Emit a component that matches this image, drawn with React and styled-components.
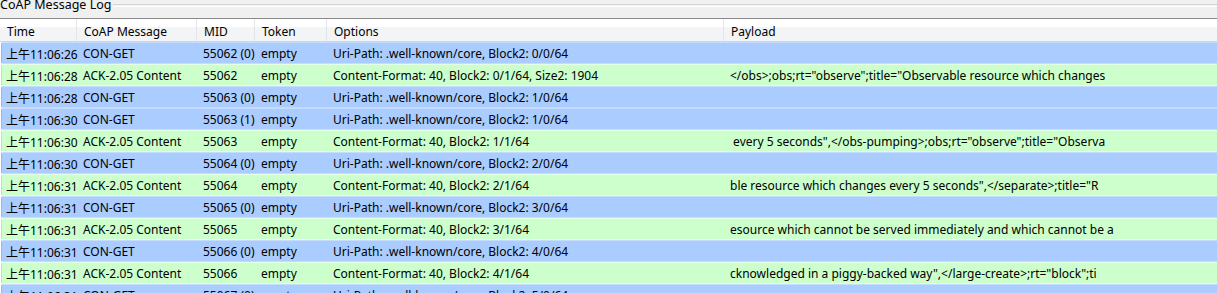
import React from 'react';
import styled, { createGlobalStyle } from 'styled-components';

const GlobalStyle = createGlobalStyle`
  html, body {
    margin: 0;
    padding: 0;
    background: #f0f0f0;
    overflow: hidden;
  }
  body {
    font-family: "Noto Sans", "Noto Sans CJK SC", sans-serif;
    font-size: 12px;
    color: #000;
  }
`;

const Panel = styled.div`
  width: 1217px;
  height: 293px;
  overflow: hidden;
  background: #f0f0f0;
`;

const TitleBar = styled.div`
  display: flex;
  align-items: flex-start;
  height: 18px;
  border-bottom: 1px solid #8a8a8a;
`;

const Title = styled.div`
  margin-top: -3px;
  padding-right: 2px;
  line-height: 16px;
  font-size: 12.5px;
  white-space: nowrap;
`;

const TitleRule = styled.div`
  flex: 1;
  margin-top: 4px;
  height: 1px;
  border-top: 1px solid #d5d5d5;
  border-bottom: 1px solid #ffffff;
`;

const Table = styled.div`
  background: #ffffff;
`;

const columns = '77px 120px 58px 72px 397px 1fr';

const HeaderRow = styled.div`
  display: grid;
  grid-template-columns: ${columns};
  height: 22px;
  border-bottom: 1px solid #d5d5d5;
  background: linear-gradient(#ffffff 0%, #ffffff 36%, #f3f4f6 37%, #f3f4f6 100%);
`;

const HeaderCell = styled.div`
  display: flex;
  align-items: center;
  padding: 2px 0 0 7px;
  border-right: 1px solid ${p => (p.$last ? 'transparent' : '#e3e5e8')};
  white-space: nowrap;
`;

const palette = {
  request: { bg: '#aaccff', edge: '#c6dcff', side: '#94b8ee' },
  response: { bg: '#ccffcc', edge: '#e2ffe2', side: '#b8eab8' },
};

const Row = styled.div`
  display: grid;
  grid-template-columns: ${columns};
  height: 20px;
  margin: 0 0 0 1px;
  background: ${p => palette[p.$kind].bg};
  border-top: 1px solid ${p => palette[p.$kind].edge};
  border-bottom: 1px solid ${p => palette[p.$kind].edge};
  border-left: 1px solid ${p => palette[p.$kind].side};
  border-radius: 2px 0 0 2px;
`;

const Cell = styled.div`
  display: flex;
  align-items: center;
  padding: 1px 0 0 4px;
  white-space: pre;
  overflow: hidden;
`;

const headers = ['Time', 'CoAP Message', 'MID', 'Token', 'Options', 'Payload'];

const messages = [
  ['上午11:06:26', 'CON-GET', '55062 (0)', 'empty', 'Uri-Path: .well-known/core, Block2: 0/0/64', ''],
  ['上午11:06:28', 'ACK-2.05 Content', '55062', 'empty', 'Content-Format: 40, Block2: 0/1/64, Size2: 1904', '</obs>;obs;rt="observe";title="Observable resource which changes'],
  ['上午11:06:28', 'CON-GET', '55063 (0)', 'empty', 'Uri-Path: .well-known/core, Block2: 1/0/64', ''],
  ['上午11:06:30', 'CON-GET', '55063 (1)', 'empty', 'Uri-Path: .well-known/core, Block2: 1/0/64', ''],
  ['上午11:06:30', 'ACK-2.05 Content', '55063', 'empty', 'Content-Format: 40, Block2: 1/1/64', ' every 5 seconds",</obs-pumping>;obs;rt="observe";title="Observa'],
  ['上午11:06:30', 'CON-GET', '55064 (0)', 'empty', 'Uri-Path: .well-known/core, Block2: 2/0/64', ''],
  ['上午11:06:31', 'ACK-2.05 Content', '55064', 'empty', 'Content-Format: 40, Block2: 2/1/64', 'ble resource which changes every 5 seconds",</separate>;title="R'],
  ['上午11:06:31', 'CON-GET', '55065 (0)', 'empty', 'Uri-Path: .well-known/core, Block2: 3/0/64', ''],
  ['上午11:06:31', 'ACK-2.05 Content', '55065', 'empty', 'Content-Format: 40, Block2: 3/1/64', 'esource which cannot be served immediately and which cannot be a'],
  ['上午11:06:31', 'CON-GET', '55066 (0)', 'empty', 'Uri-Path: .well-known/core, Block2: 4/0/64', ''],
  ['上午11:06:31', 'ACK-2.05 Content', '55066', 'empty', 'Content-Format: 40, Block2: 4/1/64', 'cknowledged in a piggy-backed way",</large-create>;rt="block";ti'],
  ['上午11:06:31', 'CON-GET', '55067 (0)', 'empty', 'Uri-Path: .well-known/core, Block2: 5/0/64', ''],
];

export default function App() {
  return (
    <Panel>
      <GlobalStyle />
      <TitleBar>
        <Title>CoAP Message Log</Title>
        <TitleRule />
      </TitleBar>
      <Table>
        <HeaderRow>
          {headers.map((h, i) => (
            <HeaderCell key={h} $last={i === headers.length - 1}>{h}</HeaderCell>
          ))}
        </HeaderRow>
        {messages.map((m, i) => (
          <Row key={i} $kind={m[1].startsWith('CON') ? 'request' : 'response'}>
            {m.map((v, j) => (
              <Cell key={j}>{v}</Cell>
            ))}
          </Row>
        ))}
      </Table>
    </Panel>
  );
}
